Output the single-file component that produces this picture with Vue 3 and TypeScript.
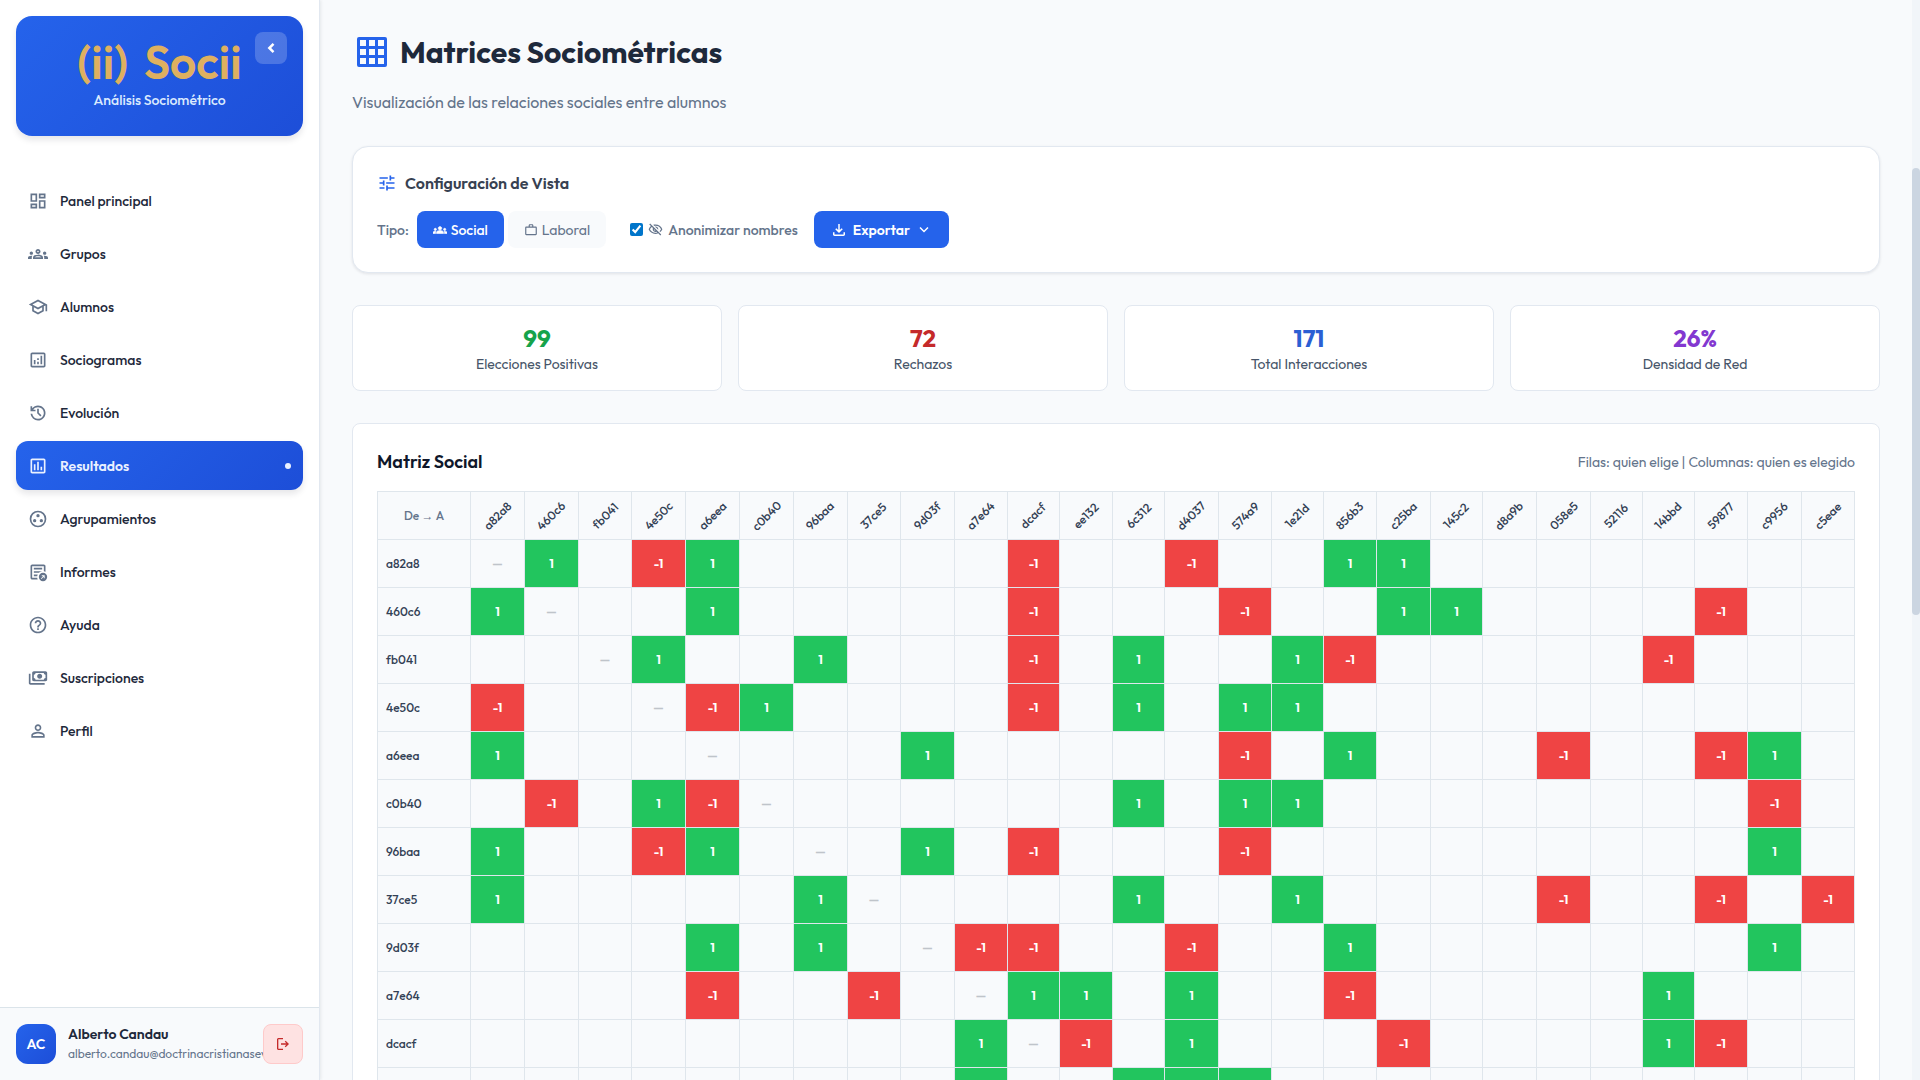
<script setup lang="ts">
import { computed, ref } from 'vue'

interface Icon {
  d: string
  box?: string
}

interface NavItem {
  label: string
  icon: Icon
}

interface Column {
  id: string
  width: number
}

interface Row {
  positive: number[]
  negative: number[]
}

const SYMBOL_BOX = '0 -960 960 960'

const groupsFilled =
  'M4 13c1.1 0 2-.9 2-2s-.9-2-2-2-2 .9-2 2 .9 2 2 2zm1.13 1.1c-.37-.06-.74-.1-1.13-.1-.99 0-1.93.21-2.78.58A2.01 2.01 0 0 0 0 16.43V18h4.5v-1.61c0-.83.23-1.61.63-2.29zM20 13c1.1 0 2-.9 2-2s-.9-2-2-2-2 .9-2 2 .9 2 2 2zm4 3.43c0-.81-.48-1.53-1.22-1.85A6.95 6.95 0 0 0 20 14c-.39 0-.76.04-1.13.1.4.68.63 1.46.63 2.29V18H24v-1.57zm-7.76-2.78A10.05 10.05 0 0 0 12 12.75c-1.63 0-3.07.39-4.24.9A2.99 2.99 0 0 0 6 16.39V18h12v-1.61c0-1.18-.68-2.26-1.76-2.74zM12 6c-1.66 0-3 1.34-3 3s1.34 3 3 3 3-1.34 3-3-1.34-3-3-3z'

const navItems: NavItem[] = [
  {
    label: 'Panel principal',
    icon: { d: 'M19 5v2h-4V5h4M9 5v6H5V5h4m10 8v6h-4v-6h4M9 17v2H5v-2h4M21 3h-8v6h8V3zM11 3H3v10h8V3zm10 8h-8v10h8V11zm-10 4H3v6h8v-6z' },
  },
  {
    label: 'Grupos',
    icon: { d: groupsFilled + 'M8.07 16c.09-.23.13-.39.91-.69.97-.38 1.99-.56 3.02-.56s2.05.18 3.02.56c.77.3.81.46.91.69H8.07zM12 8c.55 0 1 .45 1 1s-.45 1-1 1-1-.45-1-1 .45-1 1-1z' },
  },
  {
    label: 'Alumnos',
    icon: { d: 'M12 3 1 9l4 2.18v6L12 21l7-3.82v-6l2-1.09V17h2V9L12 3zm6.82 6L12 12.72 5.18 9 12 5.28 18.82 9zM17 15.99l-5 2.73-5-2.73v-3.72L12 15l5-2.73v3.72z' },
  },
  {
    label: 'Sociogramas',
    icon: { d: 'M19 3H5c-1.1 0-2 .9-2 2v14c0 1.1.9 2 2 2h14c1.1 0 2-.9 2-2V5c0-1.1-.9-2-2-2zm0 16H5V5h14v14zM7 12h2v5H7zm8-5h2v10h-2zm-4 7h2v3h-2zm0-4h2v2h-2z' },
  },
  {
    label: 'Evolución',
    icon: {
      box: SYMBOL_BOX,
      d: 'M480-120q-138 0-240.5-91.5T122-440h82q14 104 92.5 172T480-200q117 0 198.5-81.5T760-480q0-117-81.5-198.5T480-760q-69 0-129 32t-101 88h110v80H120v-240h80v94q51-64 124.5-99T480-840q75 0 140.5 28.5t114 77q48.5 48.5 77 114T840-480q0 75-28.5 140.5t-77 114q-48.5 48.5-114 77T480-120Zm112-192L440-464v-216h80v184l128 128-56 56Z',
    },
  },
  {
    label: 'Resultados',
    icon: { d: 'M9 17H7v-7h2v7zm4 0h-2V7h2v10zm4 0h-2v-4h2v4zm2 2H5V5h14v14zm0-16H5c-1.1 0-2 .9-2 2v14c0 1.1.9 2 2 2h14c1.1 0 2-.9 2-2V5c0-1.1-.9-2-2-2z' },
  },
  {
    label: 'Agrupamientos',
    icon: { d: 'M12 2a10 10 0 1 0 0 20 10 10 0 0 0 0-20zm0 2a8 8 0 1 1 0 16 8 8 0 0 1 0-16zM8 12a2 2 0 1 0 0 4 2 2 0 0 0 0-4zM12 6a2 2 0 1 0 0 4 2 2 0 0 0 0-4zM16 12a2 2 0 1 0 0 4 2 2 0 0 0 0-4z' },
  },
  {
    label: 'Informes',
    icon: { d: 'M5 21q-.8 0-1.4-.6T3 19V5q0-.8.6-1.4T5 3h14q.8 0 1.4.6T21 5v6.7q-.5-.2-1-.4T19 11.1V5H5v14h6.1q.1.6.2 1.1t.4.9zM7 17h4.1q.1-.5.2-1t.4-1H7zM7 13h6.1q.8-.8 1.8-1.2T17 11.1V11H7zM7 9h10V7H7zM18 23a5 5 0 1 1 0-10 5 5 0 0 1 0 10zM16.2 20.5l-.7-.7 2.8-2.8H16.5v-1H20v3.5h-1v-1.8z' },
  },
  {
    label: 'Ayuda',
    icon: { d: 'M11 18h2v-2h-2v2zm1-16C6.48 2 2 6.48 2 12s4.48 10 10 10 10-4.48 10-10S17.52 2 12 2zm0 18c-4.41 0-8-3.59-8-8s3.59-8 8-8 8 3.59 8 8-3.59 8-8 8zm0-14c-2.21 0-4 1.79-4 4h2c0-1.1.9-2 2-2s2 .9 2 2c0 2-3 1.75-3 5h2c0-2.25 3-2.5 3-5 0-2.21-1.79-4-4-4z' },
  },
  {
    label: 'Suscripciones',
    icon: {
      box: SYMBOL_BOX,
      d: 'M560-440q-50 0-85-35t-35-85q0-50 35-85t85-35q50 0 85 35t35 85q0 50-35 85t-85 35ZM280-320q-33 0-56.5-23.5T200-400v-320q0-33 23.5-56.5T280-800h560q33 0 56.5 23.5T920-720v320q0 33-23.5 56.5T840-320H280Zm80-80h400q0-33 23.5-56.5T840-480v-160q-33 0-56.5-23.5T760-720H360q0 33-23.5 56.5T280-640v160q33 0 56.5 23.5T360-400Zm440 240H120q-33 0-56.5-23.5T40-240v-440h80v440h680v80Z',
    },
  },
  {
    label: 'Perfil',
    icon: { d: 'M12 5.9a2.1 2.1 0 1 1 0 4.2 2.1 2.1 0 0 1 0-4.2m0 9c2.97 0 6.1 1.46 6.1 2.1v1.1H5.9V17c0-.64 3.13-2.1 6.1-2.1M12 4C9.79 4 8 5.79 8 8s1.79 4 4 4 4-1.79 4-4-1.79-4-4-4zm0 9c-2.67 0-8 1.34-8 4v3h16v-3c0-2.66-5.33-4-8-4z' },
  },
]

const activeItem = 'Resultados'

const stats = [
  { value: '99', label: 'Elecciones Positivas', tone: 'green' },
  { value: '72', label: 'Rechazos', tone: 'red' },
  { value: '171', label: 'Total Interacciones', tone: 'blue' },
  { value: '26%', label: 'Densidad de Red', tone: 'purple' },
]

const columns: Column[] = [
  { id: 'a82a8', width: 54 },
  { id: '460c6', width: 54 },
  { id: 'fb041', width: 53 },
  { id: '4e50c', width: 54 },
  { id: 'a6eea', width: 54 },
  { id: 'c0b40', width: 54 },
  { id: '96baa', width: 54 },
  { id: '37ce5', width: 53 },
  { id: '9d03f', width: 54 },
  { id: 'a7e64', width: 53 },
  { id: 'dcacf', width: 52 },
  { id: 'ee132', width: 53 },
  { id: '6c312', width: 52 },
  { id: 'd4037', width: 54 },
  { id: '574a9', width: 53 },
  { id: '1e21d', width: 52 },
  { id: '856b3', width: 53 },
  { id: 'c25ba', width: 54 },
  { id: '145c2', width: 52 },
  { id: 'd8a9b', width: 54 },
  { id: '058e5', width: 54 },
  { id: '52116', width: 52 },
  { id: '14bbd', width: 52 },
  { id: '59877', width: 53 },
  { id: 'c9956', width: 54 },
  { id: 'c5eae', width: 53 },
]

const rows: Row[] = [
  { positive: [1, 4, 16, 17], negative: [3, 10, 13] },
  { positive: [0, 4, 17, 18], negative: [10, 14, 23] },
  { positive: [3, 6, 12, 15], negative: [10, 16, 22] },
  { positive: [5, 12, 14, 15], negative: [0, 4, 10] },
  { positive: [0, 8, 16, 24], negative: [14, 20, 23] },
  { positive: [3, 12, 14, 15], negative: [1, 4, 24] },
  { positive: [0, 4, 8, 24], negative: [3, 10, 14] },
  { positive: [0, 6, 12, 15], negative: [20, 23, 25] },
  { positive: [4, 6, 16, 24], negative: [9, 10, 13] },
  { positive: [10, 11, 13, 22], negative: [4, 7, 16] },
  { positive: [9, 13, 22], negative: [11, 17, 23] },
  { positive: [9, 12, 13, 14], negative: [] },
]

const matrix = computed(() =>
  rows.map((row, r) => ({
    id: columns[r].id,
    cells: columns.map((_, c) => {
      if (c === r) return { text: '—', kind: 'self' }
      if (row.positive.includes(c)) return { text: '1', kind: 'positive' }
      if (row.negative.includes(c)) return { text: '-1', kind: 'negative' }
      return { text: '', kind: 'empty' }
    }),
  })),
)

const matrixType = ref<'social' | 'laboral'>('social')
const anonymous = ref(true)
</script>

<template>
  <div class="app">
    <aside class="sidebar">
      <div class="brand">
        <div class="brand-name"><span>(ii)</span><span>Socii</span></div>
        <div class="brand-tag">Análisis Sociométrico</div>
        <button class="collapse" type="button" aria-label="Contraer menú">
          <svg viewBox="0 0 24 24" width="20" height="20"><path d="m15 7-5 5 5 5" fill="none" stroke="currentColor" stroke-width="3" /></svg>
        </button>
      </div>

      <nav class="nav">
        <a
          v-for="item in navItems"
          :key="item.label"
          href="#"
          class="nav-item"
          :class="{ active: item.label === activeItem }"
        >
          <svg :viewBox="item.icon.box ?? '0 0 24 24'" width="20" height="20"><path :d="item.icon.d" fill-rule="evenodd" /></svg>
          <span class="nav-label">{{ item.label }}</span>
          <span v-if="item.label === activeItem" class="dot"></span>
        </a>
      </nav>

      <div class="user">
        <div class="avatar">AC</div>
        <div class="user-text">
          <div class="user-name">Alberto Candau</div>
          <div class="user-mail">alberto.candau@doctrinacristianasevilla.com</div>
        </div>
        <button class="logout" type="button" aria-label="Cerrar sesión">
          <svg viewBox="0 -960 960 960" width="16" height="16"><path d="M200-120q-33 0-56.500-23.500T120-200v-560q0-33 23.500-56.500T200-840h280v80H200v560h280v80H200Zm440-160-55-58 102-102H360v-80h327L585-622l55-58 200 200-200 200Z" /></svg>
        </button>
      </div>
    </aside>

    <main class="main">
      <header class="page-head">
        <h1>
          <svg viewBox="0 0 40 40" width="40" height="40"><path fill-rule="evenodd" d="M7 5h26a2 2 0 0 1 2 2v26a2 2 0 0 1-2 2H7a2 2 0 0 1-2-2V7a2 2 0 0 1 2-2zM8 8v6h6V8zm9 0v6h6V8zm9 0v6h6V8zM8 17v6h6v-6zm9 0v6h6v-6zm9 0v6h6v-6zM8 26v6h6v-6zm9 0v6h6v-6zm9 0v6h6v-6z" /></svg>
          Matrices Sociométricas
        </h1>
        <p>Visualización de las relaciones sociales entre alumnos</p>
      </header>

      <section class="config">
        <h2>
          <svg viewBox="0 0 24 24" width="20" height="20"><path d="M3 17v2h6v-2H3zM3 5v2h10V5H3zm10 16v-2h8v-2h-8v-2h-2v6h2zM7 9v2H3v2h4v2h2V9H7zm14 4v-2H11v2h10zm-6-4h2V7h4V5h-4V3h-2v6z" /></svg>
          Configuración de Vista
        </h2>
        <div class="controls">
          <div class="types">
            <span class="type-label">Tipo:</span>
            <div class="toggle">
              <button type="button" :class="{ on: matrixType === 'social' }" @click="matrixType = 'social'">
                <svg class="solid" viewBox="0 0 24 24" width="14" height="14"><path :d="groupsFilled" /></svg>
                Social
              </button>
              <button type="button" :class="{ on: matrixType === 'laboral' }" @click="matrixType = 'laboral'">
                <svg viewBox="0 0 24 24" width="14" height="14"><path d="M14 6V4h-4v2h4zM4 8v11h16V8H4zm16-2c1.11 0 2 .89 2 2v11c0 1.11-.89 2-2 2H4c-1.11 0-2-.89-2-2V8c0-1.11.9-2 2-2h4V4c0-1.11.89-2 2-2h4c1.11 0 2 .89 2 2v2h4z" /></svg>
                Laboral
              </button>
            </div>
          </div>
          <label class="anon">
            <input v-model="anonymous" type="checkbox" />
            <svg viewBox="0 0 24 24" width="15" height="15"><path d="M12 6a9.77 9.77 0 0 1 8.82 5.5 9.65 9.65 0 0 1-2.41 3.12l1.41 1.41c1.39-1.23 2.49-2.77 3.18-4.53C21.27 7.11 17 4 12 4c-1.27 0-2.49.2-3.64.57l1.65 1.65C10.66 6.09 11.32 6 12 6zm-1.07 1.14L13 9.21c.57.25 1.03.71 1.28 1.28l2.07 2.07c.08-.34.14-.7.14-1.07C16.5 9.01 14.48 7 12 7c-.37 0-.72.05-1.07.14zM2.01 3.87l2.68 2.68A11.74 11.74 0 0 0 1 11.5C2.73 15.89 7 19 12 19c1.52 0 2.98-.29 4.32-.82l3.42 3.42 1.41-1.41L3.42 2.45 2.01 3.87zm7.5 7.5 2.61 2.61c-.04.01-.08.02-.12.02a2.5 2.5 0 0 1-2.5-2.5c0-.05.01-.08.01-.13zm-3.4-3.4 1.75 1.75a4.6 4.6 0 0 0-.36 1.78 4.507 4.507 0 0 0 6.27 4.14l.98.98c-.88.24-1.8.38-2.75.38a9.77 9.77 0 0 1-8.82-5.5c.7-1.43 1.72-2.61 2.93-3.53z" /></svg>
            Anonimizar nombres
          </label>
          <button type="button" class="export">
            <svg viewBox="0 0 24 24" width="18" height="18"><path d="m12 16-5-5 1.4-1.45 2.6 2.6V4h2v8.15l2.6-2.6L17 11zM6 20q-.825 0-1.412-.587T4 18v-3h2v3h12v-3h2v3q0 .825-.587 1.413T18 20z" /></svg>
            Exportar
            <svg viewBox="0 0 24 24" width="18" height="18"><path d="m12 15.4-6-6L7.4 8l4.6 4.6L16.6 8 18 9.4z" /></svg>
          </button>
        </div>
      </section>

      <section class="stats">
        <div v-for="stat in stats" :key="stat.label" class="stat">
          <div class="stat-value" :class="stat.tone">{{ stat.value }}</div>
          <div class="stat-label">{{ stat.label }}</div>
        </div>
      </section>

      <section class="matrix-card">
        <div class="matrix-head">
          <h2>Matriz Social</h2>
          <span>Filas: quien elige | Columnas: quien es elegido</span>
        </div>
        <table>
          <colgroup>
            <col class="names-col" />
            <col v-for="col in columns" :key="col.id" :style="{ width: col.width + 'px' }" />
          </colgroup>
          <thead>
            <tr>
              <th class="corner" scope="col">De <span class="arrow">→</span> A</th>
              <th v-for="col in columns" :key="col.id" scope="col"><span class="tilt">{{ col.id }}</span></th>
            </tr>
          </thead>
          <tbody>
            <tr v-for="row in matrix" :key="row.id">
              <th scope="row">{{ row.id }}</th>
              <td v-for="(cell, c) in row.cells" :key="c" :class="cell.kind">{{ cell.text }}</td>
            </tr>
          </tbody>
        </table>
      </section>
    </main>

    <div class="scroll-track"><div class="scroll-thumb"></div></div>
  </div>
</template>

<style>
body {
  margin: 0;
  background: #f8fafc;
}
</style>

<style scoped>
* {
  box-sizing: border-box;
}

.app {
  display: flex;
  height: 100vh;
  overflow: hidden;
  background: #f8fafc;
  color: #1e293b;
  font-family: Outfit, Lato, "Liberation Sans", sans-serif;
  font-size: 14px;
  line-height: 20px;
}

button {
  margin: 0;
  border: 0;
  font: inherit;
  cursor: pointer;
}

svg {
  display: block;
  flex: none;
  fill: currentColor;
}

h1,
h2,
p {
  margin: 0;
}

/* Sidebar */
.sidebar {
  display: flex;
  flex: none;
  flex-direction: column;
  width: 320px;
  background: #fff;
  border-right: 1px solid #e2e8f0;
  box-shadow: 1px 0 3px rgba(15, 23, 42, 0.08);
}

.brand {
  position: relative;
  display: flex;
  flex-direction: column;
  align-items: center;
  height: 120px;
  margin: 16px 16px 40px;
  padding-top: 22px;
  border-radius: 16px;
  background: linear-gradient(135deg, #2563eb, #1d4ed8);
  box-shadow: 0 4px 6px rgba(15, 23, 42, 0.1);
}

.brand-name {
  display: flex;
  gap: 16px;
  color: #deb060;
  font-size: 46px;
  font-weight: 600;
  line-height: 48px;
}

.brand-tag {
  margin-top: 4px;
  color: #dbeafe;
  font-weight: 500;
}

.collapse {
  position: absolute;
  top: 16px;
  right: 16px;
  display: grid;
  place-items: center;
  width: 32px;
  height: 32px;
  padding: 0;
  border-radius: 8px;
  background: rgba(255, 255, 255, 0.2);
  color: #fff;
}

.nav {
  display: flex;
  flex: 1;
  flex-direction: column;
  gap: 4px;
  padding: 0 16px;
}

.nav-item {
  display: flex;
  align-items: center;
  gap: 12px;
  height: 49px;
  padding: 0 12px;
  border-radius: 12px;
  color: #64748b;
  text-decoration: none;
}

.nav-label {
  flex: 1;
  color: #1e293b;
  font-weight: 500;
}

.nav-item.active {
  background: linear-gradient(135deg, #2563eb, #1d4ed8);
  box-shadow: 0 4px 6px rgba(15, 23, 42, 0.1);
  color: #eaf1ff;
}

.active .nav-label {
  color: #eaf1ff;
  font-weight: 600;
}

.dot {
  width: 6px;
  height: 6px;
  border-radius: 50%;
  background: #eaf1ff;
}

.user {
  display: flex;
  align-items: center;
  height: 73px;
  padding: 0 16px;
  border-top: 1px solid #dbe4ea;
  background: #f8fafc;
}

.avatar {
  display: grid;
  flex: none;
  place-items: center;
  width: 40px;
  height: 40px;
  margin-right: 12px;
  border-radius: 12px;
  background: linear-gradient(135deg, #2563eb, #1d4ed8);
  color: #fff;
  font-weight: 600;
}

.user-text {
  flex: 1;
  min-width: 0;
  overflow: hidden;
  white-space: nowrap;
}

.user-name {
  font-weight: 600;
}

.user-mail {
  color: #64748b;
  font-size: 12px;
}

.logout {
  display: grid;
  flex: none;
  place-items: center;
  width: 40px;
  height: 40px;
  padding: 0;
  border: 1px solid #fecaca;
  border-radius: 8px;
  background: #fee2e2;
  color: #c52a2a;
}

/* Main column */
.main {
  flex: 1;
  min-width: 0;
  padding: 32px 32px 0;
}

.page-head h1 {
  display: flex;
  align-items: center;
  gap: 8px;
  font-size: 30px;
  font-weight: 700;
  line-height: 40px;
}

.page-head h1 svg {
  color: #2563eb;
}

.page-head p {
  margin: 18px 0 32px;
  color: #64748b;
  font-size: 16px;
  line-height: 24px;
}

.config {
  padding: 24px;
  border: 1px solid #e2e8f0;
  border-radius: 16px;
  background: #fff;
  box-shadow: 0 1px 3px rgba(15, 23, 42, 0.1);
}

.config h2 {
  display: flex;
  align-items: center;
  gap: 8px;
  margin-bottom: 16px;
  color: #374151;
  font-size: 16px;
  font-weight: 600;
  line-height: 24px;
}

.config h2 svg {
  color: #2563eb;
}

.controls {
  display: flex;
  align-items: center;
  color: #64748b;
}

.types,
.toggle {
  display: flex;
  align-items: center;
}

.type-label {
  margin-right: 8px;
  font-weight: 500;
}

.toggle {
  gap: 4px;
}

.toggle button {
  display: flex;
  align-items: center;
  gap: 4px;
  height: 37px;
  padding: 0 16px;
  border-radius: 8px;
  background: #f8fafc;
  color: #64748b;
}

.toggle .on {
  background: #2563eb;
  color: #fff;
  font-weight: 500;
}

.solid {
  stroke: currentColor;
  stroke-width: 1px;
}

.anon {
  display: flex;
  align-items: center;
  gap: 5px;
  margin: 0 16px 0 24px;
  font-weight: 500;
}

.anon input {
  width: 13px;
  height: 13px;
  margin: 0;
  accent-color: #0075ca;
}

.export {
  display: flex;
  align-items: center;
  gap: 5px;
  height: 37px;
  padding: 0 16px;
  border-radius: 8px;
  background: #2563eb;
  color: #fff;
  font-weight: 600;
}

.stats {
  display: grid;
  grid-template-columns: repeat(4, 1fr);
  gap: 16px;
  margin: 32px 0;
}

.stat {
  padding: 16px;
  border: 1px solid #e2e8f0;
  border-radius: 8px;
  background: #fff;
  text-align: center;
}

.stat-value {
  font-size: 24px;
  font-weight: 700;
  line-height: 32px;
}

.green {
  color: #16a34a;
}

.red {
  color: #c52a2a;
}

.blue {
  color: #2b5fd3;
}

.purple {
  color: #8338d0;
}

.stat-label {
  color: #475569;
}

.matrix-card {
  padding: 24px;
  border: 1px solid #e2e8f0;
  border-radius: 8px;
  background: #fff;
}

.matrix-head {
  display: flex;
  align-items: center;
  justify-content: space-between;
  height: 27px;
  margin-bottom: 16px;
  color: #64748b;
}

.matrix-head h2 {
  color: #0f172a;
  font-size: 18px;
  font-weight: 600;
}

table {
  width: 100%;
  border-collapse: collapse;
  table-layout: fixed;
  background: #f8fafc;
  font-size: 12px;
}

.names-col {
  width: 93px;
}

th,
td {
  height: 48px;
  padding: 0;
  border: 1px solid #dfe6ec;
  text-align: center;
}

th {
  color: #334155;
  font-weight: 500;
}

.corner {
  color: #64748b;
}

.arrow {
  font-family: "Liberation Sans", sans-serif;
}

tbody th {
  padding-left: 8px;
  text-align: left;
}

.tilt {
  display: inline-block;
  transform: rotate(-45deg);
}

.self {
  color: #bfc4ca;
  font-weight: 700;
}

.positive,
.negative {
  color: #fff;
  font-weight: 700;
}

.positive {
  background: #22c55e;
}

.negative {
  background: #ef4444;
}

/* Page scrollbar */
.scroll-track {
  display: flex;
  flex: none;
  flex-direction: column;
  width: 8px;
  padding-top: 168px;
  background: #f1f5f9;
}

.scroll-thumb {
  height: 49%;
  border-radius: 4px;
  background: #cbd5e1;
}
</style>
